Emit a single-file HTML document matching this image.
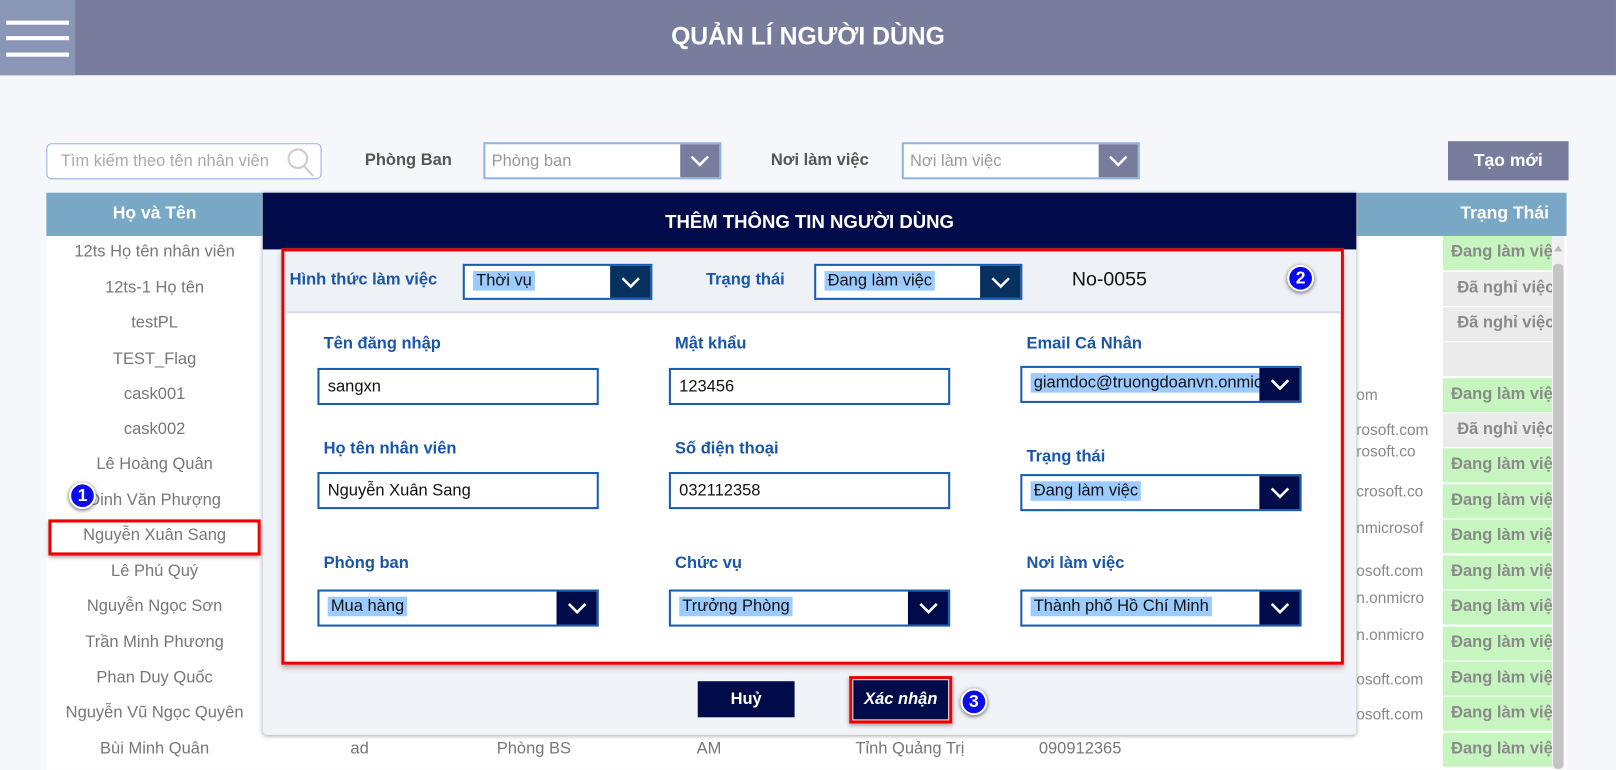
<!DOCTYPE html>
<html><head><meta charset="utf-8"><style>
*{box-sizing:border-box;margin:0;padding:0}
html,body{width:1616px;height:769px;overflow:hidden;background:#f5f7fb;font-family:"Liberation Sans","DejaVu Sans",sans-serif}
#w{position:absolute;left:0;top:0;width:1568px;height:746px;transform:scale(1.0306);transform-origin:0 0}
.a{position:absolute}
.hdr{left:0;top:0;width:1568px;height:73px;background:#787d9e}
.ham{left:0;top:0;width:73px;height:73px;background:#8a96b6}
.ham i{position:absolute;left:6px;width:61px;height:4px;background:#fff}
.dd{border:2px solid #8fb4e0;background:#fff;color:#999;font-size:16px;padding:8px 6px}
.arr{position:absolute;right:0;top:0;bottom:0;width:38px;background:#787d9e}
.arr svg,.da svg{position:absolute;left:50%;top:50%;transform:translate(-50%,-50%)}
.row{position:absolute;left:45px;width:210px;text-align:center;color:#777;font-size:16px}
.st{position:absolute;left:1400px;width:106px;height:33px;font-weight:bold;font-size:16px;color:#8a8a8a;padding:7px 0 0 8px;white-space:nowrap;overflow:hidden}
.g{background:#c6f5c0}.n{background:#ebebeb}
.em{position:absolute;left:1316px;width:84px;overflow:hidden;white-space:nowrap;color:#888;font-size:15px;direction:rtl;text-align:left}
.lb{position:absolute;color:#1a56a8;font-weight:bold;font-size:16px}
.in{position:absolute;width:273px;height:36px;border:2px solid #1a5cb0;background:#fff;font-size:16px;color:#111;padding:8px 8px}
.sel{padding:6px 8px}
.sel span{background:#9ccbff;padding:1px 3px}
.da{position:absolute;right:0;top:0;bottom:0;width:39px;background:#020b4a}
.bd{position:absolute;width:26px;height:26px;border-radius:50%;background:#0a0af0;border:2px solid #fff;box-shadow:0 1px 4px #555;color:#fff;font-weight:bold;font-size:17px;text-align:center;line-height:22px}
</style></head><body><div id="w">
<div class="a hdr"></div>
<div class="a ham"><i style="top:20px"></i><i style="top:35px"></i><i style="top:51px"></i></div>
<div class="a" style="left:0;width:1568px;top:22px;text-align:center;color:#fff;font-weight:bold;font-size:24px">QUẢN LÍ NGƯỜI DÙNG</div>

<div class="a" style="left:45px;top:139px;width:267px;height:35px;border:1px solid #8fb4e0;border-radius:5px;background:#fff;color:#aaa;font-size:16px;padding:8px 13px">Tìm kiếm theo tên nhân viên
<svg class="a" style="left:230px;top:2px" width="32" height="30"><circle cx="13" cy="12" r="9" fill="none" stroke="#ccc" stroke-width="2"/><line x1="19" y1="19" x2="28" y2="29" stroke="#ccc" stroke-width="2"/></svg></div>
<div class="a" style="left:354px;top:147px;font-weight:bold;color:#555;font-size:16px">Phòng Ban</div>
<div class="a dd" style="left:469px;top:138px;width:231px;height:36px">Phòng ban<div class="arr"><svg width="20" height="12"><path d="M2 2L10 10L18 2" fill="none" stroke="#fff" stroke-width="2.5"/></svg></div></div>
<div class="a" style="left:748px;top:147px;font-weight:bold;color:#555;font-size:16px">Nơi làm việc</div>
<div class="a dd" style="left:875px;top:138px;width:231px;height:36px">Nơi làm việc<div class="arr"><svg width="20" height="12"><path d="M2 2L10 10L18 2" fill="none" stroke="#fff" stroke-width="2.5"/></svg></div></div>
<div class="a" style="left:1405px;top:137px;width:117px;height:38px;background:#787d9e;color:#fff;font-weight:bold;font-size:17px;text-align:center;line-height:38px">Tạo mới</div>

<div class="a" style="left:45px;top:187px;width:1475px;height:560px;background:#fff"></div>
<div class="a" style="left:45px;top:187px;width:1475px;height:42px;background:#78a8c6"></div>
<div class="a" style="left:45px;top:197px;width:210px;text-align:center;color:#fff;font-weight:bold;font-size:17px">Họ và Tên</div>
<div class="a" style="left:1400px;top:197px;width:120px;text-align:center;color:#fff;font-weight:bold;font-size:17px">Trạng Thái</div>

<div class="row" style="top:236px">12ts Họ tên nhân viên</div>
<div class="row" style="top:271px">12ts-1 Họ tên</div>
<div class="row" style="top:305px">testPL</div>
<div class="row" style="top:340px">TEST_Flag</div>
<div class="row" style="top:374px">cask001</div>
<div class="row" style="top:408px">cask002</div>
<div class="row" style="top:442px">Lê Hoàng Quân</div>
<div class="row" style="top:477px">Đinh Văn Phượng</div>
<div class="row" style="top:511px">Nguyễn Xuân Sang</div>
<div class="row" style="top:546px">Lê Phú Quý</div>
<div class="row" style="top:580px">Nguyễn Ngọc Sơn</div>
<div class="row" style="top:615px">Trần Minh Phương</div>
<div class="row" style="top:649px">Phan Duy Quốc</div>
<div class="row" style="top:683px">Nguyễn Vũ Ngọc Quyên</div>
<div class="row" style="top:718px">Bùi Minh Quân</div>
<div class="a" style="left:47px;top:504px;width:206px;height:35px;border:3px solid #e00;box-shadow:0 2px 4px #999"></div>
<div class="bd" style="left:67px;top:468px">1</div>
<div class="a" style="left:340px;top:718px;color:#777;font-size:16px">ad</div>
<div class="a" style="left:482px;top:718px;color:#777;font-size:16px">Phòng BS</div>
<div class="a" style="left:676px;top:718px;color:#777;font-size:16px">AM</div>
<div class="a" style="left:830px;top:718px;color:#777;font-size:16px">Tỉnh Quảng Trị</div>
<div class="a" style="left:1008px;top:718px;color:#777;font-size:16px">090912365</div>

<div class="em" style="top:375px">om</div>
<div class="em" style="top:409px">rosoft.com</div>
<div class="em" style="top:430px">rosoft.co</div>
<div class="em" style="top:469px">crosoft.co</div>
<div class="em" style="top:504px">nmicrosof</div>
<div class="em" style="top:546px">osoft.com</div>
<div class="em" style="top:572px">n.onmicro</div>
<div class="em" style="top:608px">n.onmicro</div>
<div class="em" style="top:651px">osoft.com</div>
<div class="em" style="top:685px">osoft.com</div>

<div class="st g" style="top:229px">Đang làm việc</div>
<div class="st n" style="top:264px;padding-left:14px">Đã nghỉ việc</div>
<div class="st n" style="top:298px;padding-left:14px">Đã nghỉ việc</div>
<div class="st n" style="top:332px"></div>
<div class="st g" style="top:367px">Đang làm việc</div>
<div class="st n" style="top:401px;padding-left:14px">Đã nghỉ việc</div>
<div class="st g" style="top:435px">Đang làm việc</div>
<div class="st g" style="top:470px">Đang làm việc</div>
<div class="st g" style="top:504px">Đang làm việc</div>
<div class="st g" style="top:539px">Đang làm việc</div>
<div class="st g" style="top:573px">Đang làm việc</div>
<div class="st g" style="top:608px">Đang làm việc</div>
<div class="st g" style="top:642px">Đang làm việc</div>
<div class="st g" style="top:676px">Đang làm việc</div>
<div class="st g" style="top:711px">Đang làm việc</div>
<div class="a" style="left:1506px;top:229px;width:12px;height:517px;background:#f0f0f0"></div>
<div class="a" style="left:1507px;top:256px;width:10px;height:490px;background:#c4c4c4;border-radius:4px"></div>
<div class="a" style="left:1508px;top:238px;width:0;height:0;border-left:4px solid transparent;border-right:4px solid transparent;border-bottom:6px solid #bbb"></div>

<div class="a" style="left:255px;top:187px;width:1061px;height:526px;background:#f0f3f8;box-shadow:0 1px 4px #aaa;border-radius:0 0 4px 4px"></div>
<div class="a" style="left:255px;top:187px;width:1061px;height:55px;background:#020b4a;color:#fff;font-weight:bold;font-size:18px;text-align:center;line-height:56px">THÊM THÔNG TIN NGƯỜI DÙNG</div>
<div class="a" style="left:273px;top:241px;width:1031px;height:404px;background:#fff;border:3px solid #e00;box-shadow:0 3px 5px #aaa"></div>
<div class="a" style="left:276px;top:244px;width:1025px;height:60px;background:#eef1f6;border-bottom:2px solid #dde"></div>

<div class="lb" style="left:281px;top:263px">Hình thức làm việc</div>
<div class="in sel" style="left:449px;top:256px;width:184px;height:35px"><span>Thời vụ</span><div class="da" style="background:#06305e"><svg width="20" height="12"><path d="M2 2L10 10L18 2" fill="none" stroke="#fff" stroke-width="2.5"/></svg></div></div>
<div class="lb" style="left:685px;top:263px">Trạng thái</div>
<div class="in sel" style="left:790px;top:256px;width:202px;height:35px"><span>Đang làm việc</span><div class="da" style="background:#06305e"><svg width="20" height="12"><path d="M2 2L10 10L18 2" fill="none" stroke="#fff" stroke-width="2.5"/></svg></div></div>
<div class="a" style="left:1040px;top:261px;font-size:19px;color:#111">No-0055</div>
<div class="bd" style="left:1249px;top:257px">2</div>

<div class="lb" style="left:314px;top:325px">Tên đăng nhập</div>
<div class="in" style="left:308px;top:357px">sangxn</div>
<div class="lb" style="left:655px;top:325px">Mật khẩu</div>
<div class="in" style="left:649px;top:357px">123456</div>
<div class="lb" style="left:996px;top:325px">Email Cá Nhân</div>
<div class="in sel" style="left:990px;top:355px;overflow:hidden;white-space:nowrap"><span>giamdoc@truongdoanvn.onmicrosoft.com</span><div class="da"><svg width="20" height="12"><path d="M2 2L10 10L18 2" fill="none" stroke="#fff" stroke-width="2.5"/></svg></div></div>

<div class="lb" style="left:314px;top:427px">Họ tên nhân viên</div>
<div class="in" style="left:308px;top:458px">Nguyễn Xuân Sang</div>
<div class="lb" style="left:655px;top:427px">Số điện thoại</div>
<div class="in" style="left:649px;top:458px">032112358</div>
<div class="lb" style="left:996px;top:435px">Trạng thái</div>
<div class="in sel" style="left:990px;top:460px"><span>Đang làm việc</span><div class="da"><svg width="20" height="12"><path d="M2 2L10 10L18 2" fill="none" stroke="#fff" stroke-width="2.5"/></svg></div></div>

<div class="lb" style="left:314px;top:538px">Phòng ban</div>
<div class="in sel" style="left:308px;top:572px"><span>Mua hàng</span><div class="da"><svg width="20" height="12"><path d="M2 2L10 10L18 2" fill="none" stroke="#fff" stroke-width="2.5"/></svg></div></div>
<div class="lb" style="left:655px;top:538px">Chức vụ</div>
<div class="in sel" style="left:649px;top:572px"><span>Trưởng Phòng</span><div class="da"><svg width="20" height="12"><path d="M2 2L10 10L18 2" fill="none" stroke="#fff" stroke-width="2.5"/></svg></div></div>
<div class="lb" style="left:996px;top:538px">Nơi làm việc</div>
<div class="in sel" style="left:990px;top:572px"><span>Thành phố Hồ Chí Minh</span><div class="da"><svg width="20" height="12"><path d="M2 2L10 10L18 2" fill="none" stroke="#fff" stroke-width="2.5"/></svg></div></div>

<div class="a" style="left:677px;top:661px;width:94px;height:35px;background:#020b4a;color:#fff;font-weight:bold;font-size:16px;text-align:center;line-height:35px">Huỷ</div>
<div class="a" style="left:824px;top:656px;width:100px;height:46px;border:3px solid #e00;box-shadow:0 2px 4px #999"></div>
<div class="a" style="left:828px;top:660px;width:92px;height:38px;background:#020b4a;color:#fff;font-weight:bold;font-style:italic;font-size:16px;text-align:center;line-height:38px">Xác nhận</div>
<div class="bd" style="left:932px;top:668px">3</div>
</div></body></html>
